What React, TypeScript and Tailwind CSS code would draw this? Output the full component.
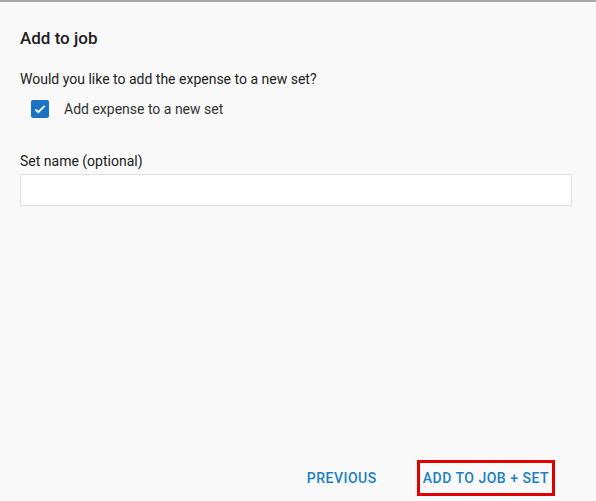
import React from "react";

const App = () => {
  return (
    <div
      className="w-[596px] h-[501px] bg-[#f9f9f9] border-t-2 border-[#a9a9a9] flex flex-col text-[#212121]"
      style={{ fontFamily: "Roboto, 'Liberation Sans', sans-serif" }}
    >
      <div className="px-5 pt-[26px] flex flex-col flex-grow">
        <h2 className="text-[17px] font-medium leading-5">Add to job</h2>
        <p className="mt-[21px] text-[14px] leading-5">Would you like to add the expense to a new set?</p>
        <label className="mt-[8px] flex items-center gap-[15px] pl-[11px] h-6">
          <span className="w-[18px] h-[18px] rounded-[2px] bg-[#1a73c4] flex items-center justify-center">
            <svg width="14" height="14" viewBox="0 0 24 24" fill="none">
              <path d="M4 12.5l5 5L20 6.5" stroke="white" strokeWidth="3.2" />
            </svg>
          </span>
          <span className="text-[14px] text-[#333]">Add expense to a new set</span>
        </label>
        <p className="mt-[30px] text-[14px] leading-5">Set name (optional)</p>
        <input className="mt-[3px] h-[32px] w-[552px] bg-white border border-[#e0e0e0] outline-none" />
        <div className="flex-grow" />
        <div className="flex justify-end items-center gap-[40px] pb-[5px] pr-[21px]">
          <button className="text-[14px] font-medium text-[#1a7fc4] tracking-[0.5px]">PREVIOUS</button>
          <button className="h-[36px] px-[3px] border-[3px] border-[#e00000] text-[14px] font-medium text-[#1a7fc4] tracking-[0.5px]">
            ADD TO JOB + SET
          </button>
        </div>
      </div>
    </div>
  );
};

export default App;
